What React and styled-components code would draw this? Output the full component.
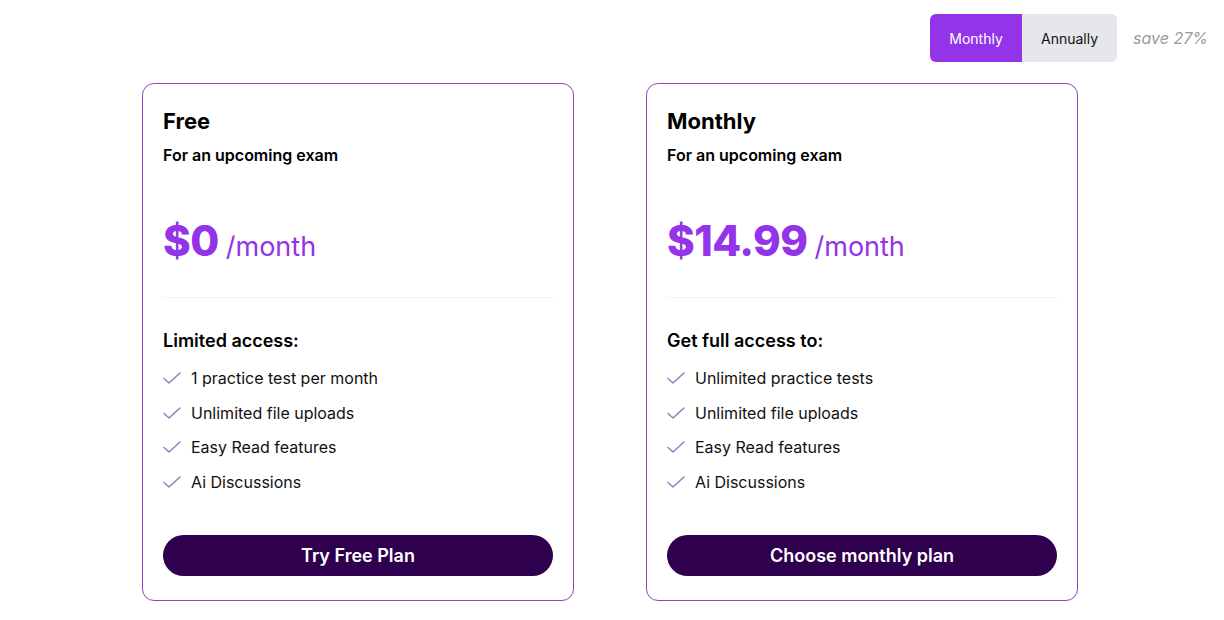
import styled, { createGlobalStyle } from "styled-components"

const GlobalStyle = createGlobalStyle`
  body {
    margin: 0;
    background: #ffffff;
    font-family: Inter, "Open Sans", sans-serif;
    color: #111;
  }
`

const Page = styled.div`
  width: 1224px;
  height: 620px;
  box-sizing: border-box;
  padding: 14px 16px 0 0;
  display: flex;
  flex-direction: column;
`

const TopBar = styled.div`
  display: flex;
  justify-content: flex-end;
  align-items: center;
  gap: 16px;
`

const Toggle = styled.div`
  display: flex;
  height: 48px;
  border-radius: 6px;
  overflow: hidden;
  background: #e5e7eb;
`

const ToggleButton = styled.button`
  border: none;
  width: ${p => p.$w}px;
  font-family: inherit;
  font-size: 14px;
  background: ${p => (p.$active ? "#9333ea" : "#e5e7eb")};
  color: ${p => (p.$active ? "#ffffff" : "#111")};
  cursor: pointer;
`

const Save = styled.span`
  font-size: 16px;
  font-style: italic;
  color: #9a9a9a;
`

const Cards = styled.div`
  margin-top: 21px;
  padding-left: 142px;
  display: flex;
  gap: 72px;
`

const Card = styled.div`
  width: 432px;
  box-sizing: border-box;
  border: 1px solid #8e44c0;
  border-radius: 12px;
  padding: 23px 20px 24px 20px;
  display: flex;
  flex-direction: column;
`

const Title = styled.h2`
  margin: 0;
  font-size: 22px;
  line-height: 28px;
  font-weight: 700;
  color: #000;
`

const Subtitle = styled.p`
  margin: 9px 0 0;
  font-size: 16px;
  line-height: 22px;
  font-weight: 600;
  color: #000;
`

const Price = styled.div`
  margin-top: 50px;
  height: 50px;
  display: flex;
  align-items: baseline;
  gap: 7px;
  color: #9333ea;
`

const Amount = styled.span`
  font-size: 42px;
  line-height: 50px;
  font-weight: 800;
  letter-spacing: -0.5px;
`

const Per = styled.span`
  font-size: 27px;
  font-weight: 400;
`

const Divider = styled.hr`
  margin: 31px 0 0;
  border: none;
  height: 1px;
  background: #f2f2f2;
`

const ListTitle = styled.h3`
  margin: 31px 0 0;
  font-size: 18px;
  line-height: 24px;
  font-weight: 600;
  color: #000;
`

const List = styled.ul`
  list-style: none;
  margin: 14px 0 0;
  padding: 0;
  display: flex;
  flex-direction: column;
  gap: 12.5px;
`

const Item = styled.li`
  display: flex;
  align-items: center;
  gap: 10px;
  font-size: 16px;
  line-height: 22px;
  color: #111;
`

const CtaButton = styled.button`
  margin-top: 42px;
  height: 41px;
  border: none;
  border-radius: 999px;
  background: #2e004e;
  color: #fff;
  font-family: inherit;
  font-size: 18px;
  font-weight: 600;
  cursor: pointer;
`

const Check = () => (
  <svg width="18" height="12" viewBox="0 0 18 12" fill="none">
    <path d="M1 6.5 L6 11 L17 1" stroke="#9a72c0" strokeWidth="1.4" strokeLinecap="round" strokeLinejoin="round" />
  </svg>
)

const plans = [
  {
    name: "Free",
    price: "$0",
    listTitle: "Limited access:",
    items: ["1 practice test per month", "Unlimited file uploads", "Easy Read features", "Ai Discussions"],
    cta: "Try Free Plan",
  },
  {
    name: "Monthly",
    price: "$14.99",
    listTitle: "Get full access to:",
    items: ["Unlimited practice tests", "Unlimited file uploads", "Easy Read features", "Ai Discussions"],
    cta: "Choose monthly plan",
  },
]

const App = () => {
  return (
    <>
      <GlobalStyle />
      <Page>
        <TopBar>
          <Toggle>
            <ToggleButton $active $w={92}>Monthly</ToggleButton>
            <ToggleButton $w={95}>Annually</ToggleButton>
          </Toggle>
          <Save>save 27%</Save>
        </TopBar>
        <Cards>
          {plans.map(plan => (
            <Card key={plan.name}>
              <Title>{plan.name}</Title>
              <Subtitle>For an upcoming exam</Subtitle>
              <Price>
                <Amount>{plan.price}</Amount>
                <Per>/month</Per>
              </Price>
              <Divider />
              <ListTitle>{plan.listTitle}</ListTitle>
              <List>
                {plan.items.map(item => (
                  <Item key={item}>
                    <Check />
                    {item}
                  </Item>
                ))}
              </List>
              <CtaButton>{plan.cta}</CtaButton>
            </Card>
          ))}
        </Cards>
      </Page>
    </>
  )
}

export default App
